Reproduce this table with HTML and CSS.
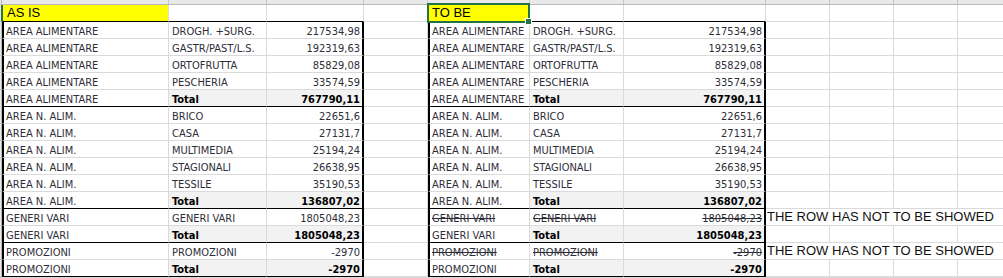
FILE: index.html
```html
<!DOCTYPE html>
<html lang="it">
<head>
<meta charset="utf-8">
<title>AS IS / TO BE</title>
<link rel="stylesheet" href="styles.css">
</head>
<body>
<div class="sheet">
  <!-- column header strip -->
  <div class="h rh"></div><div class="h"></div><div class="h"></div><div class="h"></div><div class="h"></div><div class="h hsel"></div><div class="h"></div><div class="h"></div><div class="h"></div><div class="h"></div><div class="h"></div><div class="h"></div>

  <!-- row 1 -->
  <div class="rh rsel"></div>
  <div class="c title titlea">AS IS</div>
  <div class="c bb"></div>
  <div class="c bb"></div>
  <div class="c"></div>
  <div class="c title bb sel">TO BE</div>
  <div class="c bb"></div>
  <div class="c bb"></div>
  <div class="c"></div><div class="c"></div><div class="c"></div><div class="c"></div>

  <!-- row 2 -->
  <div class="rh"></div>
  <div class="c bl">AREA ALIMENTARE</div><div class="c">DROGH. +SURG.</div><div class="c num br">217534,98</div>
  <div class="c"></div>
  <div class="c bl">AREA ALIMENTARE</div><div class="c">DROGH. +SURG.</div><div class="c num br">217534,98</div>
  <div class="c"></div><div class="c"></div><div class="c"></div><div class="c"></div>

  <!-- row 3 -->
  <div class="rh"></div>
  <div class="c bl">AREA ALIMENTARE</div><div class="c">GASTR/PAST/L.S.</div><div class="c num br">192319,63</div>
  <div class="c"></div>
  <div class="c bl">AREA ALIMENTARE</div><div class="c">GASTR/PAST/L.S.</div><div class="c num br">192319,63</div>
  <div class="c"></div><div class="c"></div><div class="c"></div><div class="c"></div>

  <!-- row 4 -->
  <div class="rh"></div>
  <div class="c bl">AREA ALIMENTARE</div><div class="c">ORTOFRUTTA</div><div class="c num br">85829,08</div>
  <div class="c"></div>
  <div class="c bl">AREA ALIMENTARE</div><div class="c">ORTOFRUTTA</div><div class="c num br">85829,08</div>
  <div class="c"></div><div class="c"></div><div class="c"></div><div class="c"></div>

  <!-- row 5 -->
  <div class="rh"></div>
  <div class="c bl">AREA ALIMENTARE</div><div class="c">PESCHERIA</div><div class="c num br">33574,59</div>
  <div class="c"></div>
  <div class="c bl">AREA ALIMENTARE</div><div class="c">PESCHERIA</div><div class="c num br">33574,59</div>
  <div class="c"></div><div class="c"></div><div class="c"></div><div class="c"></div>

  <!-- row 6 -->
  <div class="rh"></div>
  <div class="c bl bb">AREA ALIMENTARE</div><div class="c tot bb">Total</div><div class="c num tot br bb">767790,11</div>
  <div class="c"></div>
  <div class="c bl bb">AREA ALIMENTARE</div><div class="c tot bb">Total</div><div class="c num tot br bb">767790,11</div>
  <div class="c"></div><div class="c"></div><div class="c"></div><div class="c"></div>

  <!-- row 7 -->
  <div class="rh"></div>
  <div class="c bl">AREA N. ALIM.</div><div class="c">BRICO</div><div class="c num br">22651,6</div>
  <div class="c"></div>
  <div class="c bl">AREA N. ALIM.</div><div class="c">BRICO</div><div class="c num br">22651,6</div>
  <div class="c"></div><div class="c"></div><div class="c"></div><div class="c"></div>

  <!-- row 8 -->
  <div class="rh"></div>
  <div class="c bl">AREA N. ALIM.</div><div class="c">CASA</div><div class="c num br">27131,7</div>
  <div class="c"></div>
  <div class="c bl">AREA N. ALIM.</div><div class="c">CASA</div><div class="c num br">27131,7</div>
  <div class="c"></div><div class="c"></div><div class="c"></div><div class="c"></div>

  <!-- row 9 -->
  <div class="rh"></div>
  <div class="c bl">AREA N. ALIM.</div><div class="c">MULTIMEDIA</div><div class="c num br">25194,24</div>
  <div class="c"></div>
  <div class="c bl">AREA N. ALIM.</div><div class="c">MULTIMEDIA</div><div class="c num br">25194,24</div>
  <div class="c"></div><div class="c"></div><div class="c"></div><div class="c"></div>

  <!-- row 10 -->
  <div class="rh"></div>
  <div class="c bl">AREA N. ALIM.</div><div class="c">STAGIONALI</div><div class="c num br">26638,95</div>
  <div class="c"></div>
  <div class="c bl">AREA N. ALIM.</div><div class="c">STAGIONALI</div><div class="c num br">26638,95</div>
  <div class="c"></div><div class="c"></div><div class="c"></div><div class="c"></div>

  <!-- row 11 -->
  <div class="rh"></div>
  <div class="c bl">AREA N. ALIM.</div><div class="c">TESSILE</div><div class="c num br">35190,53</div>
  <div class="c"></div>
  <div class="c bl">AREA N. ALIM.</div><div class="c">TESSILE</div><div class="c num br">35190,53</div>
  <div class="c"></div><div class="c"></div><div class="c"></div><div class="c"></div>

  <!-- row 12 -->
  <div class="rh"></div>
  <div class="c bl bb">AREA N. ALIM.</div><div class="c tot bb">Total</div><div class="c num tot br bb">136807,02</div>
  <div class="c"></div>
  <div class="c bl bb">AREA N. ALIM.</div><div class="c tot bb">Total</div><div class="c num tot br bb">136807,02</div>
  <div class="c"></div><div class="c"></div><div class="c"></div><div class="c"></div>

  <!-- row 13 -->
  <div class="rh"></div>
  <div class="c bl">GENERI VARI</div><div class="c">GENERI VARI</div><div class="c num br">1805048,23</div>
  <div class="c"></div>
  <div class="c bl"><s>GENERI VARI</s></div><div class="c"><s>GENERI VARI</s></div><div class="c num br"><s>1805048,23</s></div>
  <div class="c note">THE ROW HAS NOT TO BE SHOWED</div>

  <!-- row 14 -->
  <div class="rh"></div>
  <div class="c bl bb">GENERI VARI</div><div class="c tot bb">Total</div><div class="c num tot br bb">1805048,23</div>
  <div class="c"></div>
  <div class="c bl bb">GENERI VARI</div><div class="c tot bb">Total</div><div class="c num tot br bb">1805048,23</div>
  <div class="c"></div><div class="c"></div><div class="c"></div><div class="c"></div>

  <!-- row 15 -->
  <div class="rh"></div>
  <div class="c bl">PROMOZIONI</div><div class="c">PROMOZIONI</div><div class="c num br">-2970</div>
  <div class="c"></div>
  <div class="c bl"><s>PROMOZIONI</s></div><div class="c"><s>PROMOZIONI</s></div><div class="c num br"><s>-2970</s></div>
  <div class="c note">THE ROW HAS NOT TO BE SHOWED</div>

  <!-- row 16 -->
  <div class="rh"></div>
  <div class="c bl bb">PROMOZIONI</div><div class="c tot bb">Total</div><div class="c num tot br bb">-2970</div>
  <div class="c"></div>
  <div class="c bl bb">PROMOZIONI</div><div class="c tot bb">Total</div><div class="c num tot br bb">-2970</div>
  <div class="c"></div><div class="c"></div><div class="c"></div><div class="c"></div>

  <!-- row 17 (partly visible) -->
  <div class="rh"></div>
  <div class="c"></div><div class="c"></div><div class="c"></div><div class="c"></div><div class="c"></div><div class="c"></div><div class="c"></div><div class="c"></div><div class="c"></div><div class="c"></div><div class="c"></div>
</div>
</body>
</html>
```

FILE: styles.css
```css
html, body {
  margin: 0;
  padding: 0;
  background: #ffffff;
  overflow: hidden;
}

body {
  width: 1003px;
  height: 278px;
}

.sheet {
  display: grid;
  grid-template-columns: 2px 167px 98px 97px 64px 102px 94px 142px 64px 64px 64px 64px;
  grid-template-rows: 5px repeat(16, 17px) 1px;
  width: 1022px;
  font-family: "DejaVu Sans Condensed", "DejaVu Sans", sans-serif;
  font-size: 11px;
  color: #2e2e38;
}

.h {
  box-sizing: border-box;
  background: #e9e9e9;
  border-right: 1px solid #c6c6c6;
  border-bottom: 1px solid #b9b9b9;
}

.hsel {
  border-bottom-color: #217346;
}

.rh {
  box-sizing: border-box;
  background: #e9e9e9;
  border-right: 1px solid #b9b9b9;
  border-bottom: 1px solid #c6c6c6;
}

.rsel {
  border-right-color: #217346;
}

.c {
  box-sizing: border-box;
  display: flex;
  align-items: flex-end;
  padding: 0 3px 0 3px;
  border-right: 1px solid #dadada;
  border-bottom: 1px solid #dadada;
  line-height: 13px;
  white-space: nowrap;
  overflow: hidden;
  min-width: 0;
}

.num {
  justify-content: flex-end;
  padding-right: 2px;
}

.tot {
  background: #f2f2f2;
  font-weight: bold;
  color: #000000;
}

.bl {
  border-left: 2px solid #000000;
  padding-left: 2px;
}

.br {
  border-right: 2px solid #000000;
}

.bb {
  border-bottom: 1px solid #000000;
}

.title {
  background: #ffff00;
  font-family: "Liberation Sans", Arial, sans-serif;
  font-size: 13px;
  line-height: 16px;
  color: #000000;
  padding-left: 4px;
}

.titlea {
  border-left: 1px solid #217346;
  border-bottom: 1px solid #000000;
}

.sel {
  position: relative;
  overflow: visible;
}

.sel::after {
  content: "";
  position: absolute;
  left: -1px;
  top: -2px;
  right: -1px;
  bottom: -2px;
  border: 2px solid #217346;
  pointer-events: none;
}

.sel::before {
  content: "";
  position: absolute;
  right: -3px;
  bottom: -4px;
  width: 5px;
  height: 5px;
  background: #217346;
  border: 1px solid #ffffff;
  z-index: 1;
}

s {
  text-decoration: line-through;
  text-decoration-thickness: 1px;
}

.note {
  grid-column: span 4;
  font-family: "Liberation Sans", Arial, sans-serif;
  font-size: 13px;
  line-height: 16px;
  color: #111111;
  padding-left: 1px;
}
```
